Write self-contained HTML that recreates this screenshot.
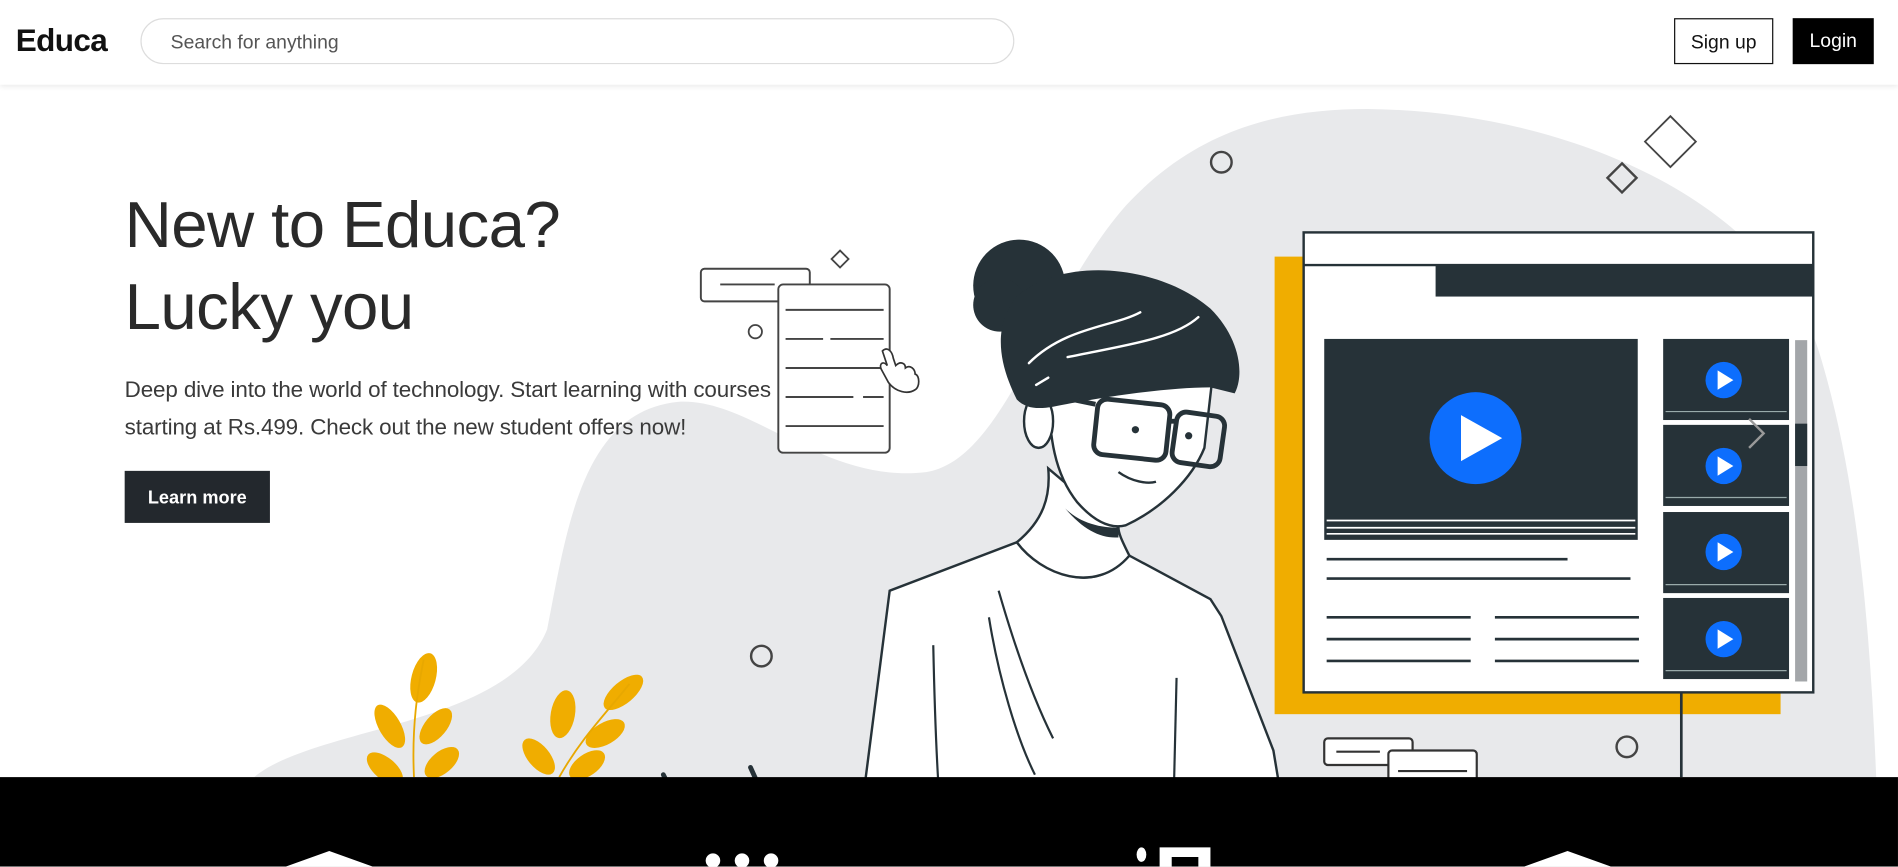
<!DOCTYPE html>
<html><head><meta charset="utf-8"><style>
html,body{margin:0;padding:0;background:#fff;overflow:hidden;width:1898px;height:867px}
#w{position:absolute;left:0;top:0;width:1568px;height:716px;transform:scale(1.21045);transform-origin:0 0;font-family:"Liberation Sans",sans-serif}
.hdr{position:absolute;left:0;top:0;width:1568px;height:70px;background:#fff;box-shadow:0 2px 4px rgba(0,0,0,.08);z-index:3}
.logo{position:absolute;left:13px;top:18px;font-size:26px;font-weight:bold;color:#111;letter-spacing:-0.5px}
.search{position:absolute;left:116px;top:15px;width:722px;height:38px;border:1px solid #ddd;border-radius:20px;box-sizing:border-box}
.search span{position:absolute;left:24px;top:11px;font-size:16px;color:#555}
.su{position:absolute;left:1383px;top:15px;width:82px;height:38px;border:1px solid #111;box-sizing:border-box;font-size:16px;text-align:center;line-height:40px;color:#111}
.li{position:absolute;left:1481px;top:15px;width:67px;height:38px;background:#000;color:#fff;font-size:16px;text-align:center;line-height:40px}
h1{position:absolute;left:103px;top:152px;margin:0;font-weight:normal;font-size:54px;line-height:68px;color:#2a2a2a;z-index:2;letter-spacing:-0.5px}
p{position:absolute;left:103px;top:306px;margin:0;font-size:18.5px;line-height:31px;color:#3a3a3a;z-index:2;width:585px;letter-spacing:-0.1px}
.btn{position:absolute;left:103px;top:389px;width:120px;height:43px;background:#23282d;color:#fff;font-weight:bold;font-size:15px;text-align:center;line-height:45px;z-index:2}
svg{position:absolute;left:0;top:0}
</style></head><body><div id="w">
<svg width="1568" height="716" viewBox="0 0 1568 716">
<path d="M210,642 C260,600 420,600 452,520 C468,440 480,340 560,332 C620,328 680,400 765,390 C830,380 860,250 930,170 C990,105 1060,90 1130,90 C1300,92 1470,170 1505,298 C1535,400 1545,520 1550,642 Z" fill="#e8e9eb"/>
<g fill="#f0ad00">
<ellipse cx="350" cy="560" rx="10" ry="21" transform="rotate(15 350 560)"/>
<ellipse cx="322" cy="600" rx="9" ry="20" transform="rotate(-30 322 600)"/>
<ellipse cx="360" cy="600" rx="9" ry="18" transform="rotate(40 360 600)"/>
<ellipse cx="318" cy="635" rx="9" ry="18" transform="rotate(-50 318 635)"/>
<ellipse cx="365" cy="630" rx="9" ry="17" transform="rotate(50 365 630)"/>
<ellipse cx="465" cy="590" rx="10" ry="20" transform="rotate(10 465 590)"/>
<ellipse cx="515" cy="572" rx="9" ry="20" transform="rotate(50 515 572)"/>
<ellipse cx="500" cy="606" rx="9" ry="18" transform="rotate(60 500 606)"/>
<ellipse cx="445" cy="625" rx="9" ry="18" transform="rotate(-40 445 625)"/>
<ellipse cx="485" cy="632" rx="9" ry="17" transform="rotate(55 485 632)"/>
</g>
<g stroke="#e8a800" stroke-width="1.5" fill="none"><path d="M342,642 C340,600 345,570 350,545"/><path d="M462,642 C480,610 500,590 520,565"/></g>
<g fill="none" stroke="#444" stroke-width="2">
<circle cx="1009" cy="134" r="8.5"/><circle cx="629" cy="542" r="8.5"/><circle cx="1344" cy="617" r="8.5"/><circle cx="624" cy="274" r="5.5" stroke-width="1.5"/>
<path d="M1380,96 L1401,117 L1380,138 L1359,117 Z" stroke-width="1.5"/>
<path d="M1340,135 L1352,147 L1340,159 L1328,147 Z"/>
<path d="M694,207 L701,214 L694,221 L687,214 Z" stroke-width="1.5"/>
</g>
<g fill="#fff" stroke="#444" stroke-width="1.6">
<rect x="579" y="222" width="90" height="27" rx="3"/>
<rect x="643" y="235" width="92" height="139" rx="4"/>
</g>
<g stroke="#444" stroke-width="1.6">
<line x1="595" y1="235" x2="640" y2="235"/>
<line x1="649" y1="256" x2="730" y2="256"/>
<line x1="649" y1="280" x2="680" y2="280"/><line x1="686" y1="280" x2="730" y2="280"/>
<line x1="649" y1="304" x2="730" y2="304"/>
<line x1="649" y1="328" x2="705" y2="328"/><line x1="713" y1="328" x2="730" y2="328"/>
<line x1="649" y1="352" x2="730" y2="352"/>
</g>
<path d="M729,290 C733,286 737,290 738,296 L740,302 C744,298 748,300 748,304 C752,301 756,305 756,309 C760,310 760,320 756,322 C750,326 740,324 734,316 L728,305 C726,300 730,298 733,302 Z" fill="#fff" stroke="#333" stroke-width="1.4"/>
<rect x="1053" y="212" width="418" height="378" fill="#f0ad00"/>
<rect x="1077" y="192" width="421" height="380" fill="#fff" stroke="#263238" stroke-width="2"/>
<line x1="1077" y1="219" x2="1498" y2="219" stroke="#263238" stroke-width="2"/>
<rect x="1186" y="219" width="312" height="26" fill="#263238"/>
<rect x="1094" y="280" width="259" height="166" fill="#263238"/>
<g stroke="#fff" stroke-width="1.4"><line x1="1096" y1="430" x2="1351" y2="430"/><line x1="1096" y1="436" x2="1351" y2="436"/><line x1="1096" y1="441" x2="1351" y2="441"/></g>
<circle cx="1219" cy="362" r="38" fill="#0d6efd"/>
<path d="M1207,343 L1241,362 L1207,381 Z" fill="#fff"/>
<g stroke="#263238" stroke-width="2.2">
<line x1="1096" y1="462" x2="1295" y2="462"/><line x1="1096" y1="478" x2="1347" y2="478"/>
<line x1="1096" y1="510" x2="1215" y2="510"/><line x1="1235" y1="510" x2="1354" y2="510"/>
<line x1="1096" y1="528" x2="1215" y2="528"/><line x1="1235" y1="528" x2="1354" y2="528"/>
<line x1="1096" y1="546" x2="1215" y2="546"/><line x1="1235" y1="546" x2="1354" y2="546"/>
<line x1="1389" y1="572" x2="1389" y2="642"/>
</g>
<g>
<rect x="1374" y="280" width="104" height="67" fill="#263238"/><rect x="1374" y="351" width="104" height="67" fill="#263238"/>
<rect x="1374" y="423" width="104" height="67" fill="#263238"/><rect x="1374" y="494" width="104" height="67" fill="#263238"/>
<g stroke="#9aa" stroke-width="1"><line x1="1376" y1="340" x2="1476" y2="340"/><line x1="1376" y1="411" x2="1476" y2="411"/><line x1="1376" y1="483" x2="1476" y2="483"/><line x1="1376" y1="554" x2="1476" y2="554"/></g>
<g fill="#0d6efd"><circle cx="1424" cy="314" r="15"/><circle cx="1424" cy="385" r="15"/><circle cx="1424" cy="456" r="15"/><circle cx="1424" cy="528" r="15"/></g>
<g fill="#fff"><path d="M1419,306 L1432,314 L1419,322Z"/><path d="M1419,377 L1432,385 L1419,393Z"/><path d="M1419,448 L1432,456 L1419,464Z"/><path d="M1419,520 L1432,528 L1419,536Z"/></g>
<rect x="1483" y="281" width="10" height="282" fill="#a3a6a9"/><rect x="1483" y="350" width="10" height="35" fill="#263238"/>
<path d="M1445,346 L1457,358 L1445,370" fill="none" stroke="#999" stroke-width="2"/>
</g>
<g fill="#fff" stroke="#333" stroke-width="1.8"><rect x="1094" y="610" width="73" height="22" rx="3"/><rect x="1147" y="620" width="73" height="30" rx="3"/></g>
<g stroke="#333" stroke-width="1.8"><line x1="1104" y1="621" x2="1140" y2="621"/><line x1="1155" y1="637" x2="1212" y2="637"/></g>
<path d="M715,644 L735,488 L840,448 C860,470 900,495 933,459 L1000,495 L1009,509 L1052,620 L1056,644 Z" fill="#fff" stroke="#263238" stroke-width="2"/>
<g stroke="#263238" stroke-width="1.8" fill="none">
<path d="M825,488 C840,540 855,580 870,610"/><path d="M817,510 C825,560 840,610 855,640"/><path d="M771,533 C772,580 773,610 775,644"/><path d="M972,560 L970,644"/>
</g>
<path d="M866,387 C868,410 862,430 840,448 C860,475 905,492 933,459 C926,445 924,440 924,436 Z" fill="#fff" stroke="#263238" stroke-width="2"/>
<path d="M880,420 C895,438 910,445 924,444 L924,436 C905,436 890,430 880,420Z" fill="#263238"/>
<path d="M866,330 C868,360 870,390 890,415 C905,432 918,437 930,434 C960,420 985,395 995,370 L1003,300 Z" fill="#fff" stroke="#263238" stroke-width="2"/>
<ellipse cx="858" cy="348" rx="12" ry="22" fill="#fff" stroke="#263238" stroke-width="2"/>
<circle cx="842" cy="236" r="38" fill="#263238"/>
<circle cx="826" cy="252" r="22" fill="#263238"/>
<path d="M840,330 C825,300 820,270 840,245 C880,210 960,220 1000,255 C1025,280 1028,310 1020,325 L1000,320 C960,320 900,330 870,336 C858,338 848,338 840,330 Z" fill="#263238"/>
<g stroke="#fff" stroke-width="2" fill="none" stroke-linecap="round"><path d="M850,300 C880,270 920,270 942,258"/><path d="M882,295 C930,285 970,280 990,262"/><path d="M856,318 L866,312"/></g>
<g stroke="#263238" stroke-width="4" fill="none"><rect x="905" y="332" width="60" height="46" rx="8" transform="rotate(6 935 355)"/><rect x="970" y="342" width="40" height="42" rx="8" transform="rotate(8 990 363)"/><line x1="886" y1="330" x2="905" y2="334"/><line x1="965" y1="348" x2="971" y2="348"/></g>
<circle cx="938" cy="355" r="3" fill="#263238"/><circle cx="982" cy="360" r="3" fill="#263238"/>
<path d="M924,390 C935,398 948,400 955,398" stroke="#263238" stroke-width="2" fill="none"/>
<g stroke="#263238" stroke-width="4" stroke-linecap="round"><line x1="548" y1="640" x2="552" y2="648"/><line x1="620" y1="634" x2="625" y2="645"/></g>
<rect x="0" y="642" width="1568" height="74" fill="#000"/>
<g fill="#fff">
<path d="M236,716 L272,703 L308,716 Z"/><path d="M1259,716 L1295,703 L1331,716 Z"/>
<ellipse cx="589" cy="711" rx="6" ry="6"/><ellipse cx="613" cy="711" rx="6" ry="6"/><ellipse cx="637" cy="711" rx="6" ry="6"/>
<ellipse cx="943" cy="706" rx="4" ry="6"/><path d="M958,700 L1000,700 L1000,716 L990,716 L990,708 L968,708 L968,716 L958,716Z"/>
</g>
</svg>
<div class="hdr"><div class="logo">Educa</div><div class="search"><span>Search for anything</span></div><div class="su">Sign up</div><div class="li">Login</div></div>
<h1>New to Educa?<br>Lucky you</h1>
<p>Deep dive into the world of technology. Start learning with courses starting at Rs.499. Check out the new student offers now!</p>
<div class="btn">Learn more</div>
</div></body></html>
